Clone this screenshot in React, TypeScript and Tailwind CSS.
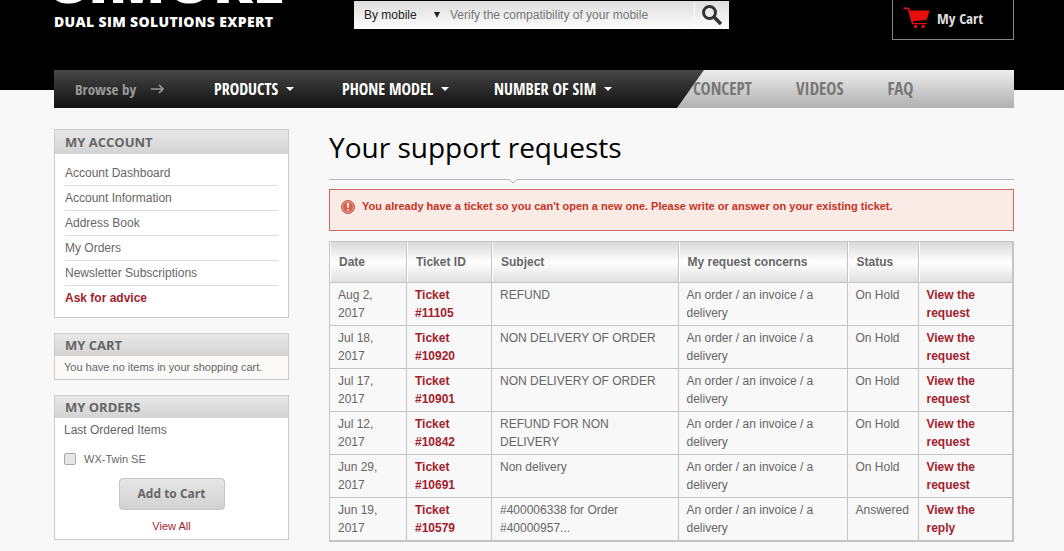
type Ticket = {
  id: string;
  date: string;
  subject: string;
  status: string;
  action: string;
};

const tickets: Ticket[] = [
  { id: '11105', date: 'Aug 2, 2017', subject: 'REFUND', status: 'On Hold', action: 'View the request' },
  { id: '10920', date: 'Jul 18, 2017', subject: 'NON DELIVERY OF ORDER', status: 'On Hold', action: 'View the request' },
  { id: '10901', date: 'Jul 17, 2017', subject: 'NON DELIVERY OF ORDER', status: 'On Hold', action: 'View the request' },
  { id: '10842', date: 'Jul 12, 2017', subject: 'REFUND FOR NON DELIVERY', status: 'On Hold', action: 'View the request' },
  { id: '10691', date: 'Jun 29, 2017', subject: 'Non delivery', status: 'On Hold', action: 'View the request' },
  { id: '10579', date: 'Jun 19, 2017', subject: '#400006338 for Order #40000957...', status: 'Answered', action: 'View the reply' },
];

const accountLinks = [
  'Account Dashboard',
  'Account Information',
  'Address Book',
  'My Orders',
  'Newsletter Subscriptions',
];

const columns = [
  { label: 'Date', width: 'w-[77px]' },
  { label: 'Ticket ID', width: 'w-[85px]' },
  { label: 'Subject', width: '' },
  { label: 'My request concerns', width: 'w-[169px]' },
  { label: 'Status', width: 'w-[71px]' },
  { label: '', width: 'w-[95px]' },
];

function BlockTitle({ children, tall }: { children: string; tall?: boolean }) {
  return (
    <h2 className={`bg-linear-to-b from-[#e8e8e8] to-[#d3d3d3] px-2.5 font-['Open_Sans',sans-serif] text-[13px] font-bold leading-[22px] text-[#666] ${tall ? 'py-px' : ''}`}>
      {children}
    </h2>
  );
}

function Caret() {
  return (
    <svg width="8" height="4" viewBox="0 0 8 4" fill="currentColor" aria-hidden="true">
      <path d="M0 0h8L4 4z" />
    </svg>
  );
}

function CartIcon() {
  return (
    <svg width="27" height="22" viewBox="0 0 27 22" fill="#e90e0e" aria-hidden="true">
      <path d="M0 .5h4.500c1 0 1.600.5 1.900 1.400L6.800 3.500H26.500L24 12.500 10 14.500l.4 1.500H23.500v1.300H9L5.200 3.500 4.600 2.200H2C1 2.200.3 1.500 0 .5z" />
      <circle cx="12.500" cy="19.500" r="1.700" />
      <circle cx="20" cy="19.500" r="1.700" />
    </svg>
  );
}

function Header() {
  return (
    <header className="flex h-[90px] items-start overflow-hidden bg-black pl-[54px] pr-[50px]">
      <a href="#" className="-mt-[52px] flex w-[300px] shrink-0 flex-col gap-0.5 whitespace-nowrap font-['Open_Sans',sans-serif] font-extrabold text-white">
        <span className="text-[59px] leading-[64px]">SIMORE</span>
        <span className="text-sm leading-4 tracking-wide">DUAL SIM SOLUTIONS EXPERT</span>
      </a>
      <form className="mt-px flex h-7 w-[375px] shrink-0 items-center bg-linear-to-b from-[#dedede] to-[#fcfcfc] text-xs">
        <div className="relative flex items-center">
          <select aria-label="Search type" className="h-7 w-[92px] appearance-none pl-2.5 leading-7 text-[#222]">
            <option>By mobile</option>
            <option>By product</option>
          </select>
          <svg className="pointer-events-none absolute right-[6px]" width="6" height="6" viewBox="0 0 6 6" fill="#222" aria-hidden="true">
            <path d="M0 0h6L3 6z" />
          </svg>
        </div>
        <input
          type="text"
          aria-label="Search"
          placeholder="Verify the compatibility of your mobile"
          className="h-6 min-w-0 flex-1 border-r border-white px-1 outline-none placeholder:text-[#777]"
        />
        <button type="button" aria-label="Search" className="flex h-7 w-[34px] items-center justify-center">
          <svg width="20" height="20" viewBox="0 0 20 20" fill="none" stroke="#333" aria-hidden="true">
            <circle cx="7.5" cy="7.5" r="6" strokeWidth="3" />
            <path d="M12 12l7 7" strokeWidth="3.600" />
          </svg>
        </button>
      </form>
      <a href="#" className="ml-auto flex h-10 w-[122px] items-center gap-[7px] border border-t-0 border-[#888] pb-1 pl-2.5 font-['Liberation_Sans_Narrow','Open_Sans_Condensed',sans-serif] text-[15px] font-bold text-[#ddd]">
        <CartIcon />
        My Cart
      </a>
    </header>
  );
}

function Nav() {
  return (
    <nav className="relative -mt-5 ml-[54px] mr-[50px] flex h-[38px] bg-linear-to-b from-[#ededed] to-[#b0b0b0] font-['Liberation_Sans_Narrow','Open_Sans_Condensed',sans-serif] font-bold">
      <div className="flex w-[650px] shrink-0 items-center bg-linear-to-b from-[#474747] to-[#121212] pl-[21px] text-base text-white [clip-path:polygon(0_0,100%_0,calc(100%-27px)_100%,0_100%)]">
        <span className="flex w-[139px] items-center gap-[15px] text-[15px] text-[#999]">
          Browse by
          <svg width="13" height="10" viewBox="0 0 13 10" fill="none" stroke="currentColor" strokeWidth="1.600" aria-hidden="true">
            <path d="M0 5h12M8 1l4 4-4 4" />
          </svg>
        </span>
        <a href="#" className="flex w-32 items-center gap-2">PRODUCTS <Caret /></a>
        <a href="#" className="flex w-38 items-center gap-2">PHONE MODEL <Caret /></a>
        <a href="#" className="flex items-center gap-2">NUMBER OF SIM <Caret /></a>
      </div>
      <div className="relative -ml-[11px] flex items-center gap-11 text-[17px] text-[#777]">
        <a href="#">CONCEPT</a>
        <a href="#">VIDEOS</a>
        <a href="#">FAQ</a>
      </div>
    </nav>
  );
}

function Sidebar() {
  return (
    <aside className="flex w-[235px] shrink-0 flex-col gap-[15px]">
      <section className="border border-[#ccc] bg-white">
        <BlockTitle tall>MY ACCOUNT</BlockTitle>
        <ul className="px-2.5 py-[7px]">
          {accountLinks.map(link => (
            <li key={link} className="border-b border-[#ddd] leading-6">
              <a href="#">{link}</a>
            </li>
          ))}
          <li className="leading-6">
            <a href="#" className="font-bold text-[#a21e2d]">Ask for advice</a>
          </li>
        </ul>
      </section>

      <section className="border border-[#ccc] bg-[#fbfaf8]">
        <BlockTitle>MY CART</BlockTitle>
        <p className="px-[9px] pb-px text-[11px] leading-[22px]">You have no items in your shopping cart.</p>
      </section>

      <section className="border border-[#ccc] bg-white">
        <BlockTitle>MY ORDERS</BlockTitle>
        <form className="flex flex-col px-[9px] pb-[3px]">
          <p className="leading-6">Last Ordered Items</p>
          <label className="mt-1.5 flex items-center gap-2 text-[11px] leading-[22px]">
            <input type="checkbox" className="size-3 appearance-none rounded-xs border border-[#aaa] bg-[#e6e6e6]" />
            WX-Twin SE
          </label>
          <button type="button" className="mt-2 h-8 w-[106px] self-center rounded-[4px] border border-[#c4c4c4] bg-linear-to-b from-[#e6e6e6] to-[#d2d2d2] font-['Open_Sans',sans-serif] text-xs font-bold text-[#666]">
            Add to Cart
          </button>
          <a href="#" className="mt-1.5 self-center text-[11px] leading-5 text-[#a21e2d]">View All</a>
        </form>
      </section>
    </aside>
  );
}

function TicketTable() {
  return (
    <table className="mt-2.5 w-full table-fixed border-collapse border border-b-2 border-r-2 border-[#c4c4c4] text-left">
      <thead>
        <tr className="h-[41px] bg-linear-to-b from-[#d9d9d9] via-white to-[#dedede]">
          {columns.map((col, i) => (
            <th key={i} className={`border border-[#c4c4c4] pl-[9px] font-bold shadow-[inset_1px_0_0_#fff] ${col.width}`}>{col.label}</th>
          ))}
        </tr>
      </thead>
      <tbody>
        {tickets.map(ticket => (
          <tr key={ticket.id} className="align-top leading-[18px]">
            <td className="border border-[#c4c4c4] py-[3px] pl-2 pr-4">{ticket.date}</td>
            <td className="border border-[#c4c4c4] py-[3px] pl-2">
              <a href="#" className="font-bold text-[#a21e2d]">{`Ticket #${ticket.id}`}</a>
            </td>
            <td className="border border-[#c4c4c4] py-[3px] pl-2 pr-5">{ticket.subject}</td>
            <td className="border border-[#c4c4c4] py-[3px] pl-2">An order / an invoice / a delivery</td>
            <td className="border border-[#c4c4c4] py-[3px] pl-2">{ticket.status}</td>
            <td className="border border-[#c4c4c4] py-[3px] pl-2 pr-4">
              <a href="#" className="font-bold text-[#a21e2d]">{ticket.action}</a>
            </td>
          </tr>
        ))}
      </tbody>
    </table>
  );
}

export default function App() {
  return (
    <div className="min-h-screen bg-[#f8f8f8] font-['Liberation_Sans',Arial,sans-serif] text-xs text-[#666]">
      <Header />
      <Nav />
      <div className="flex items-start gap-10 pb-2 pl-[54px] pr-[50px] pt-[21px]">
        <Sidebar />
        <main className="min-w-0 flex-1">
          <h1 className="pb-3.5 font-['Open_Sans',sans-serif] text-[28px] leading-9 text-black">Your support requests</h1>
          {/* rule with a small notch pointing down */}
          <div className="flex h-2.5">
            <div className="h-px w-[180px] bg-[#b9b4bd]" />
            <svg width="8" height="5" viewBox="0 0 8 5" fill="none" stroke="#b9b4bd" aria-hidden="true">
              <path d="M0 .5l4 3.500 4-3.500" />
            </svg>
            <div className="h-px flex-1 bg-[#b9b4bd]" />
          </div>
          <div role="alert" className="flex h-[42px] items-start gap-[7px] border border-[#cf6a60] bg-[#faebe7] pl-[11px] pt-[7px] text-[11px] font-bold leading-[18px] text-[#c8321f]">
            <svg className="mt-[3px]" width="14" height="14" viewBox="0 0 14 14" aria-hidden="true">
              <circle cx="7" cy="7" r="6.500" fill="#d9604d" stroke="#c0594b" />
              <circle cx="7" cy="7" r="5.500" fill="none" stroke="#eda090" />
              <path d="M6 3h2l-.4 5H6.400zM6.200 9.200h1.600v1.600H6.200z" fill="#fff" />
            </svg>
            You already have a ticket so you can't open a new one. Please write or answer on your existing ticket.
          </div>
          <TicketTable />
        </main>
      </div>
    </div>
  );
}
